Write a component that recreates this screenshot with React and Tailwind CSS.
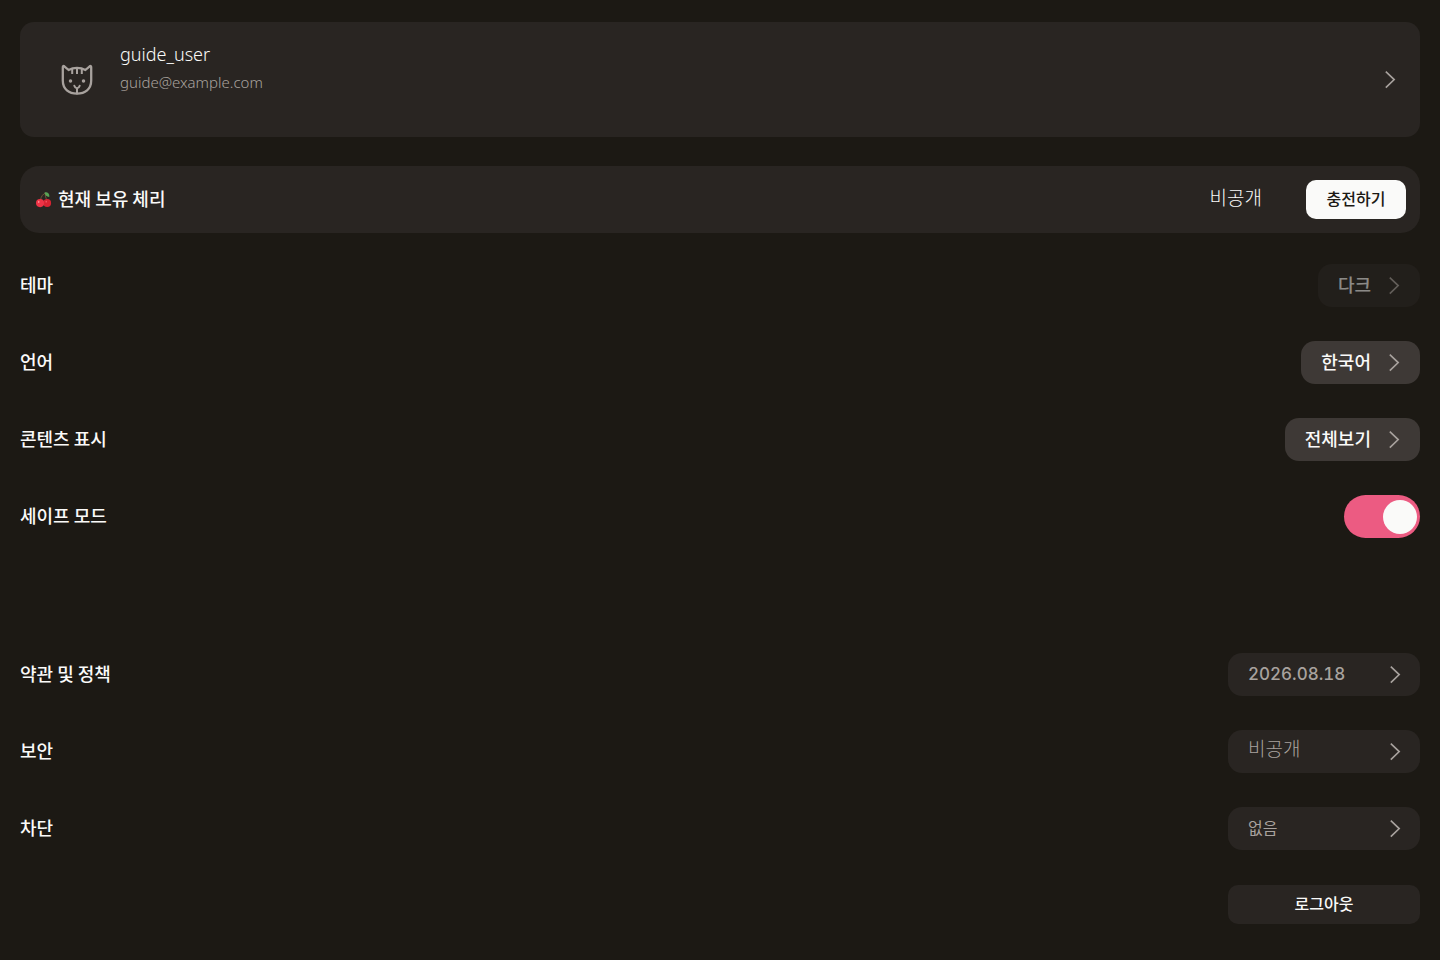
import React, { useState } from 'react';

const Chevron = ({ className }) => (
    <svg viewBox="0 0 12 20" className={`h-5 w-3 shrink-0 ${className}`} fill="none" stroke="currentColor" strokeWidth="1.6" aria-hidden="true">
        <path d="M1.8 1.6 L10.2 9.6 L1.8 17.6" />
    </svg>
);

const CatIcon = () => (
    <svg viewBox="0 0 32 32" className="h-8 w-8 shrink-0 text-[#a8a29e]" fill="none" stroke="currentColor" strokeWidth="2.3" strokeLinecap="round" strokeLinejoin="round" aria-hidden="true">
        <path d="M7.6 6 L3.3 2.3 Q1.8 1.3 1.8 3.4 V16.5 C1.8 25.2 8 29.6 16 29.6 C24 29.6 30.2 25.2 30.2 16.5 V3.4 Q30.2 1.3 28.7 2.3 L24.4 6 C19.5 3.2 12.5 3.2 7.6 6 Z" />
        <path d="M11.2 4.5 V10 M16 3.8 V10 M20.8 4.5 V10" strokeLinecap="butt" strokeWidth="2" />
        <path d="M13.3 21.8 Q13.9 23.8 16 24.4 Q18.1 23.8 18.7 21.8 M16 24.4 V29.5" strokeWidth="2" />
        <circle cx="9.5" cy="17" r="1.1" fill="currentColor" strokeWidth="1.3" />
        <circle cx="22.5" cy="17" r="1.1" fill="currentColor" strokeWidth="1.3" />
    </svg>
);

const CherryIcon = () => (
    <svg viewBox="0 0 16 16" className="h-4 w-4 shrink-0" fill="none" aria-hidden="true">
        <path d="M4.5 8 C5 4.5 7 2 9.5 1 M9.5 1 C9 4 9.8 6 11 8" stroke="#7a5a3c" strokeWidth="0.9" />
        <path d="M8.5 0.6 C10.5 -0.6 14 0.6 13.2 5 C10.6 4.8 9 3.4 8.5 0.6 Z" fill="#58a355" />
        <circle cx="11.2" cy="11" r="3.9" fill="#d92332" />
        <circle cx="4.1" cy="11.1" r="4.1" fill="#ee3346" />
        <ellipse cx="2.7" cy="9.9" rx="0.8" ry="1.1" fill="#ff8a92" />
        <ellipse cx="10.2" cy="9.7" rx="0.6" ry="0.9" fill="#f9656f" />
    </svg>
);

const SettingRow = ({ label, children }) => (
    <div className="flex h-[43px] items-center justify-between">
        <span className="pb-[3px] text-lg font-medium">{label}</span>
        {children}
    </div>
);

const SelectButton = ({ label, value, disabled }) => (
    <button
        type="button"
        aria-label={`${label} ${value}`}
        disabled={disabled}
        className={`flex h-[43px] items-center gap-[17px] rounded-[14px] px-5 text-lg font-medium ${disabled ? 'bg-[#292522] opacity-50' : 'bg-[#3e3936]'}`}
    >
        <span className="pb-[3px]">{value}</span>
        <Chevron className="text-[#a8a29e]" />
    </button>
);

const LinkButton = ({ label, value, textClass }) => (
    <button
        type="button"
        aria-label={`${label} ${value}`}
        className="flex h-[43px] w-48 items-center justify-between rounded-[14px] bg-[#292522] pr-[19px] pl-5 text-[#a8a29e]"
    >
        <span className={textClass}>{value}</span>
        <Chevron className="text-[#a8a29e]" />
    </button>
);

const App = () => {
    const [safeMode, setSafeMode] = useState(true);

    return (
        <main className="min-h-screen bg-[#1c1914] px-5 pt-[22px] pb-9 font-['Noto_Sans_CJK_KR',sans-serif] text-[#fafaf9]">
            {/* Profile */}
            <a href="#profile" className="flex h-[115px] items-center rounded-[14px] bg-[#292522] pr-6 pl-[41px]">
                <CatIcon />
                <div className="flex flex-1 flex-col self-start pt-[18px] pl-[27px] font-['Noto_Sans',sans-serif]">
                    <span className="text-lg leading-7 font-light">guide_user</span>
                    <span className="text-[15px] leading-7 font-light text-[#a8a29e]">guide@example.com</span>
                </div>
                <Chevron className="text-[#a8a29e]" />
            </a>

            {/* Cherry balance */}
            <section className="mt-[29px] flex h-[67px] items-center rounded-[19px] bg-[#292522] pr-[14px] pl-4">
                <CherryIcon />
                <h2 className="flex-1 pb-[3px] pl-[6px] text-lg font-medium">현재 보유 체리</h2>
                <span className="mr-11 pb-[4px] text-[19px] font-light">비공개</span>
                <button type="button" className="h-[39px] w-[100px] rounded-[10px] bg-[#fafaf9] pb-[3px] text-base font-medium text-[#1c1914]">
                    충전하기
                </button>
            </section>

            <section className="mt-[31px] flex flex-col gap-[34px]">
                <SettingRow label="테마">
                    <SelectButton label="테마" value="다크" disabled />
                </SettingRow>
                <SettingRow label="언어">
                    <SelectButton label="언어" value="한국어" />
                </SettingRow>
                <SettingRow label="콘텐츠 표시">
                    <SelectButton label="콘텐츠 표시" value="전체보기" />
                </SettingRow>
                <SettingRow label="세이프 모드">
                    <input
                        type="checkbox"
                        role="switch"
                        aria-label="세이프 모드"
                        checked={safeMode}
                        onChange={(e) => setSafeMode(e.target.checked)}
                        className="flex h-[43px] w-[76px] cursor-pointer appearance-none items-center rounded-full bg-[#57534e] px-[3px] before:block before:h-[34px] before:w-[34px] before:rounded-full before:bg-[#fafaf9] checked:justify-end checked:bg-[#ec5b82]"
                    />
                </SettingRow>
            </section>

            <section className="mt-[115px] flex flex-col gap-[34px]">
                <SettingRow label="약관 및 정책">
                    <LinkButton label="약관 및 정책" value="2026.08.18" textClass="font-['Inter',sans-serif] text-[17px] font-medium tabular-nums" />
                </SettingRow>
                <SettingRow label="보안">
                    <LinkButton label="보안" value="비공개" textClass="pb-[6px] text-[19px] font-light" />
                </SettingRow>
                <SettingRow label="차단">
                    <LinkButton label="차단" value="없음" textClass="pb-[3px] text-base" />
                </SettingRow>
            </section>

            <div className="mt-[35px] flex justify-end">
                <button type="button" className="h-[39px] w-48 rounded-[10px] bg-[#292522] pb-[3px] text-base font-medium">
                    로그아웃
                </button>
            </div>
        </main>
    );
};

export default App;
